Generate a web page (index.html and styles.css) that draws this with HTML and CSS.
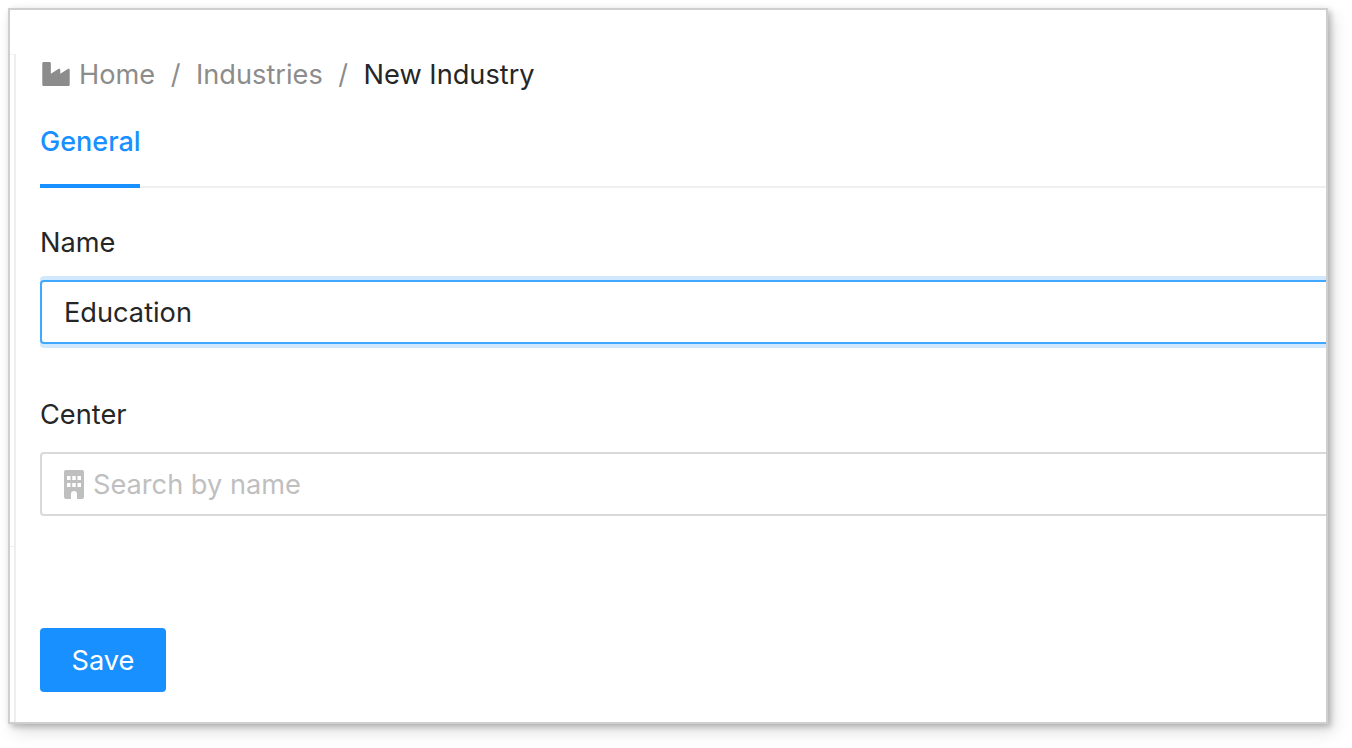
FILE: index.html
```html
<!DOCTYPE html>
<html lang="en">
<head>
  <meta charset="UTF-8" />
  <title>New Industry</title>
  <link rel="stylesheet" href="styles.css">
</head>
<body>
  <div class="window">
    <div class="rail">
      <div class="rail-top"></div>
    </div>
    <div class="content">
      <div class="breadcrumb">
        <svg class="crumb-icon" viewBox="0 0 512 448" aria-hidden="true">
          <path d="M475.115 131.781L336 220.309v-68.28c0-18.916-20.931-30.399-36.885-20.248L160 220.309V24c0-13.255-10.745-24-24-24H24C10.745 0 0 10.745 0 24v400c0 13.255 10.745 24 24 24h464c13.255 0 24-10.745 24-24V152.029c0-18.917-20.931-30.399-36.885-20.248z"/>
        </svg>
        <span class="crumb">Home</span>
        <span class="sep">/</span>
        <span class="crumb">Industries</span>
        <span class="sep">/</span>
        <span class="crumb-current">New Industry</span>
      </div>

      <div class="tabs">
        <div class="tab-active">General</div>
      </div>

      <div class="field field-name">
        <label class="field-label">Name</label>
        <div class="input input-focus">Education</div>
      </div>

      <div class="field">
        <label class="field-label">Center</label>
        <div class="input">
          <svg class="input-icon" viewBox="0 0 20 29" aria-hidden="true">
            <path fill-rule="evenodd" d="M2 0h16a2 2 0 0 1 2 2v25a2 2 0 0 1-2 2h-5v-5a3 3 0 0 0-6 0v5H2a2 2 0 0 1-2-2V2a2 2 0 0 1 2-2zM3 6v4h3.500V6zM8.250 6v4h3.500V6zM13.500 6v4H17V6zM3 13v4h3.500v-4zM8.250 13v4h3.500v-4zM13.500 13v4H17v-4z"/>
          </svg>
          <span class="placeholder">Search by name</span>
        </div>
      </div>

      <button class="btn-save">Save</button>
    </div>
  </div>
</body>
</html>
```

FILE: styles.css
```css
html, body {
  height: 100%;
}
body {
  margin: 0;
  padding: 8px 24px 24px 8px;
  box-sizing: border-box;
  background: #fff;
  font-family: Inter, "Noto Sans", sans-serif;
  font-size: 27.2px;
  color: #262626;
  overflow: hidden;
}
.window {
  display: flex;
  width: 1320px;
  height: 716px;
  box-sizing: border-box;
  border: 2px solid #cfcfcf;
  background: #fff;
  box-shadow: 3px 3px 6px rgba(0,0,0,0.22), 6px 8px 16px rgba(0,0,0,0.12), 0 0 8px rgba(0,0,0,0.03);
  overflow: hidden;
}
.rail {
  flex: none;
  width: 4px;
  margin-top: 44px;
  border-right: 2px solid #eee;
}
.rail-top {
  height: 491px;
  border-top: 1px solid #f2f2f2;
  border-bottom: 1px solid #eee;
}
.content {
  flex: 1;
  min-width: 0;
  padding-left: 24px;
}
.breadcrumb {
  display: flex;
  align-items: center;
  height: 32px;
  margin-top: 48px;
  color: #8c8c8c;
}
.crumb-icon {
  width: 28px;
  height: 24px;
  margin-left: 2px;
  margin-right: 9px;
  fill: #8c8c8c;
}
.sep {
  margin: 0 15.5px;
}
.crumb-current {
  color: #262626;
}
.tabs {
  margin-top: 30px;
  height: 66px;
  border-bottom: 2px solid #f0f0f0;
}
.tab-active {
  width: 100px;
  height: 64px;
  line-height: 44px;
  border-bottom: 4px solid #1890ff;
  color: #1890ff;
  font-size: 27px;
  font-weight: 500;
  white-space: nowrap;
}
.field {
  margin-top: 55px;
}
.field-name {
  margin-top: 39px;
}
.field-label {
  display: block;
  height: 32px;
  line-height: 32px;
  margin-bottom: 21px;
}
.input {
  display: flex;
  align-items: center;
  height: 64px;
  box-sizing: border-box;
  margin-right: -20px;
  padding: 0 22px;
  border: 2px solid #d9d9d9;
  border-radius: 4px;
  background: #fff;
}
.input-focus {
  border-color: #40a9ff;
  box-shadow: 0 -4px 0 rgba(24,144,255,0.2), 0 4px 0 rgba(24,144,255,0.2);
}
.input-icon {
  width: 20px;
  height: 29px;
  margin-right: 9px;
  fill: #bfbfbf;
}
.placeholder {
  color: #bfbfbf;
}
.btn-save {
  display: block;
  width: 126px;
  height: 64px;
  margin-top: 112px;
  padding: 0;
  border: none;
  border-radius: 4px;
  background: #1890ff;
  color: #fff;
  font-family: inherit;
  font-size: inherit;
  cursor: pointer;
}
```
